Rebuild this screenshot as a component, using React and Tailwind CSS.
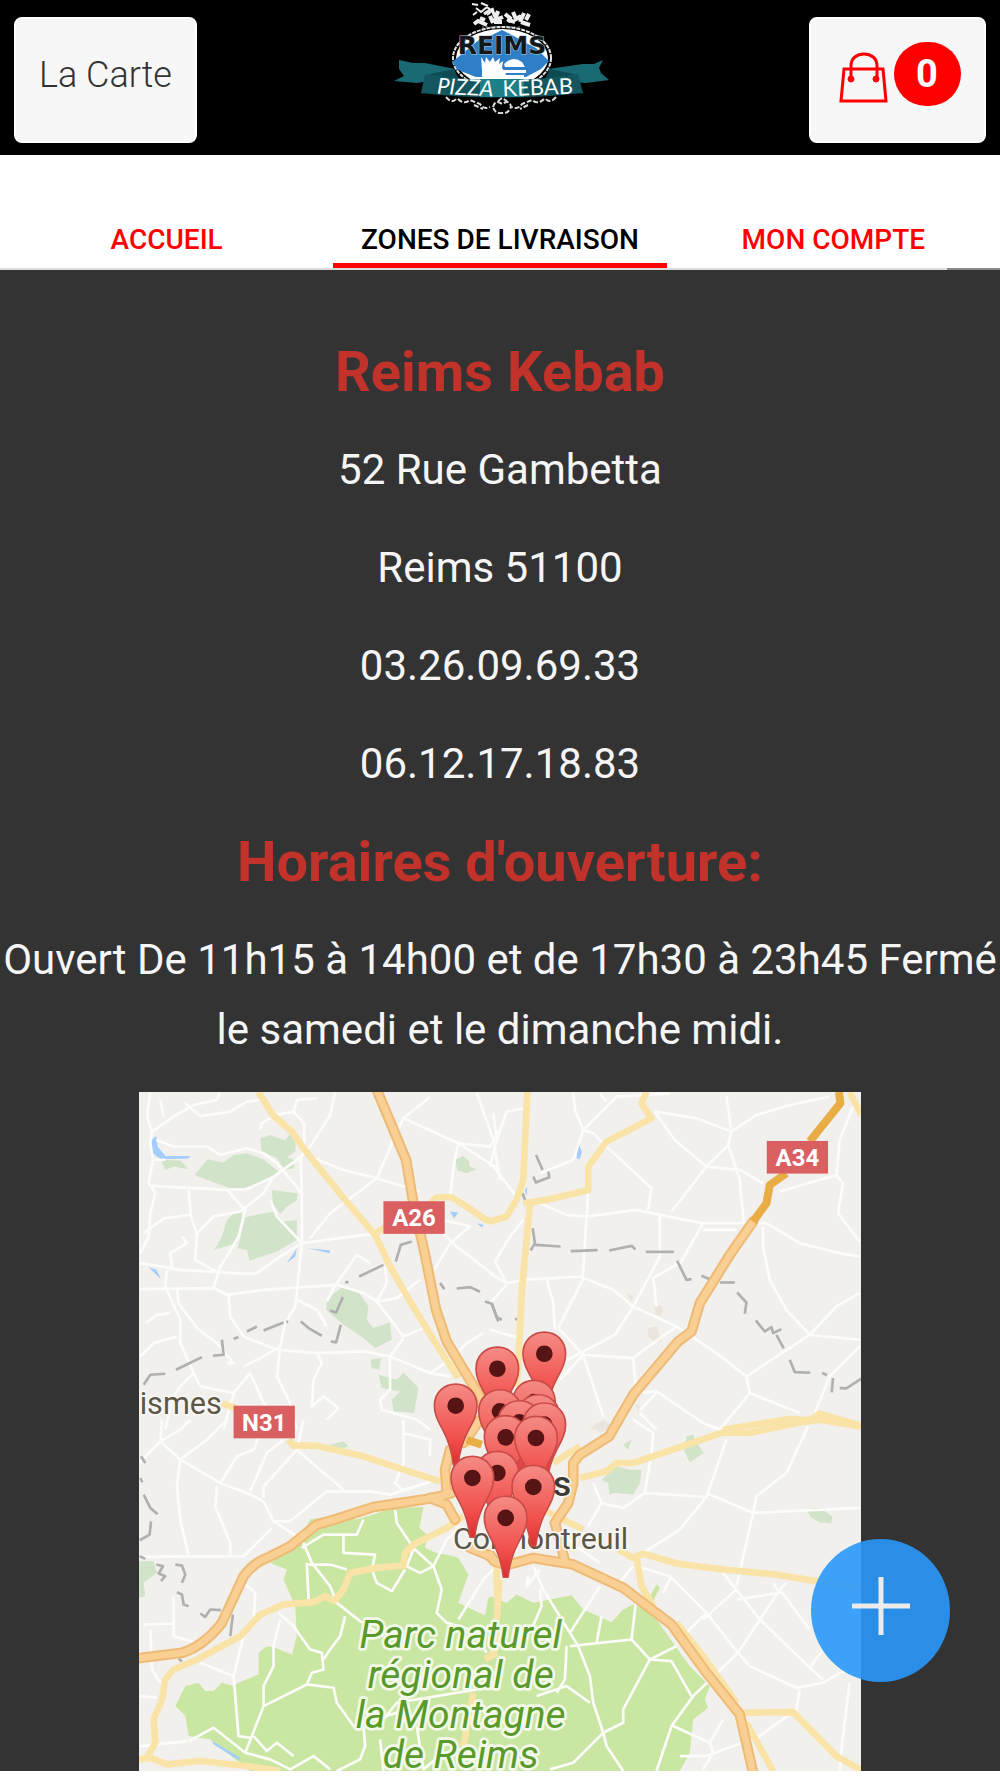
import React, { useState } from 'react';

const TABS = ['ACCUEIL', 'ZONES DE LIVRAISON', 'MON COMPTE'];

const CONTACT = ['52 Rue Gambetta', 'Reims 51100', '03.26.09.69.33', '06.12.17.18.83'];

// Map geometry, one entry per tile; coordinates are relative to the tile's x / y
const TILES = [
    {
        x: 0,
        y: 0,
        woods: [
            'M390 175L420 165L465 182L480 160L497 180L495 215L470 232L494 240L490 265L465 270L440 235L395 215Z',
            'M193 285L232 238L280 248L310 225L350 220L400 238L450 280L400 305L340 325L300 325L232 300Z',
            'M92 240L150 242L175 268L130 260L105 270Z',
            'M425 330L502 340L500 362L470 380L450 402L428 372Z',
            'M335 390L318 395L290 420L275 470L252 510L320 490L335 440Z',
            'M345 412L430 395L460 425L500 420L500 480L440 515L358 543L350 510L322 505Z',
            'M635 622L680 630L715 680L710 720L730 745L780 728L785 780L735 805L700 775L640 735L588 690L590 660Z',
            'M722 840L752 835L748 870L725 865Z',
            'M745 885L800 900L820 878L865 925L852 1000L790 995L785 960L810 935L755 925Z',
            'M975 240L1000 228L1018 245L1018 258L1040 268L1010 280L982 272Z',
        ],
        parks: [],
        blooms: [],
        waters: ['M58 185L78 168L82 200L105 228L180 228L175 236L92 238L60 215Z', 'M960 395L985 398L972 415Z', 'M1040 430L1062 435L1055 442Z', 'M55 562L78 570L92 598Z', 'M470 550L500 505L495 530Z', 'M535 505L600 512L598 520Z'],
        lanes: [
            'M60 36L50 110L65 155L60 190L68 240L55 310L75 340L60 400L55 470L30 520',
            'M65 155L130 110L190 75L260 60L270 36',
            'M165 70L210 108L300 95L350 65L390 60',
            'M78 180L130 200L230 200L270 225L350 205L400 220L440 250L500 320L515 345L515 490L500 640L495 680L465 730L450 800L440 890L475 960L500 1050',
            'M615 36L600 105L540 200L500 240L430 290L350 328L290 330L60 318',
            'M390 150L395 130L435 105L490 95L500 60L560 55',
            'M490 95L522 130L522 200L512 240L515 345',
            'M175 330L182 410L200 460L195 540L250 570L265 575L250 625L290 645',
            'M40 460L100 415L180 405M200 460L250 410L330 395L400 340L430 290',
            'M290 330L345 390L325 470L265 570M420 360L440 410L515 490L450 530L380 580L350 582L150 570L30 550',
            'M515 490L700 465L740 462M540 475L600 400L740 295L790 180L820 115L900 50',
            'M550 235L640 270L740 295L870 335M820 115L985 190L1110 270M985 190L970 260L960 350M985 190L1080 200L1110 150',
            'M1040 36L1090 180L1110 300M940 420L1020 440L960 490L900 590M920 440L980 500L1110 600',
            'M30 628L250 625L290 645L400 630L620 615L700 640L740 665L820 770L880 745',
            'M590 665L610 625L680 525L720 550M765 560L770 610L740 665L800 655L870 600',
            'M110 570L105 620L150 720L150 790L190 880L210 920L310 940M125 570L120 520L170 490L155 470',
            'M140 625L145 670L200 745L260 790L310 850L290 850',
            'M295 645L300 710L340 770L440 810L560 820L700 815L780 830L900 880L960 890',
            'M340 860L400 830L450 800M190 880L150 920L125 960L105 1050M310 940L360 880L400 970L480 1050M310 940L280 1050',
            'M560 820L575 850L550 900L545 980L580 950L625 985L590 1020M780 830L780 930L750 960L755 990L860 1020L900 1050M780 830L820 775',
            'M900 880L960 840L1010 790L1060 760M30 830L70 790L140 770M500 660L560 690L590 740',
            'M45 730L80 705L120 700M70 240L105 240M90 60L100 110',
        ],
        roads: [
            'M385 36L428 105L485 155L520 205L580 280L645 360L735 465L780 560L840 665L910 780L985 895',
            'M735 460L770 440M900 370L920 352L965 352L1010 380L1065 418L1085 425',
            'M275 970L340 995',
        ],
        motorways: ['M740 30L780 125L828 240L850 370L885 525L918 690L950 785L1010 885L1050 950L1070 1000'],
        trunks: [],
        borders: [
            'M40 915L60 885L105 882', 'M137 870L215 832', 'M248 828L280 825L275 780', 'M310 778L325 772', 'M350 755L380 740', 'M400 752L460 728', 'M468 726L474 726',
            'M512 725L535 745L575 768', 'M602 785L618 788L632 735', 'M600 692L618 698L638 652', 'M645 608L655 606', 'M687 590L760 555', 'M797 545L812 495L845 485',
            'M905 570L908 585', 'M930 610L943 628', 'M980 626L1020 622L1050 636', 'M1065 665L1085 672L1105 725',
        ],
    },
    {
        x: 1080,
        y: 0,
        woods: [],
        parks: [],
        blooms: ['M495 680L515 675L520 695L510 710L495 700Z', 'M475 745L500 740L515 785L495 785L475 770Z', 'M410 640L430 650L425 665Z', 'M435 970L455 985L445 995Z', 'M320 1030L350 1030L330 1050L300 1050Z'],
        waters: ['M265 190L276 215L270 238L260 235Z', 'M105 330L112 320L110 350Z'],
        lanes: [
            'M10 260L80 350M20 180L50 95L100 85M10 100L20 180L0 260',
            'M250 36L255 90L280 150L310 160L350 200L485 325L475 390M280 150L250 240L150 280M280 150L380 50L540 40',
            'M330 40L350 65M495 95L555 180L650 260L715 195L750 300L762 425',
            'M495 95L620 115L725 155L800 105L900 75L1020 50M710 50L725 155L715 195M650 260L750 270L820 310',
            'M150 370L230 405L290 410L440 390L510 405L640 430L830 430L930 490L1050 520L1110 530',
            'M545 395L650 260M510 405L510 530L430 680L375 765L205 855M290 410L295 330M290 410L278 600L205 745',
            'M0 580L50 610L100 600L270 590L370 630L430 680L560 740L680 820L770 890L780 940L930 1000',
            'M50 610L15 545L60 470L100 420M170 600L190 670L195 750M640 430L600 500L575 545L490 595L500 680',
            'M870 335L1040 285L1060 310L1045 400L1110 485M1090 80L1050 180L1040 285',
            'M820 440L820 500L840 600L890 690L960 765L1110 780M770 890L960 765L1040 680L1110 640',
            'M1110 800L1020 890L975 1000M205 745L280 825L430 835L440 950M280 825L210 900M280 825L340 1010',
            'M430 835L490 790L560 740M430 940L500 935L640 1030L690 1050L780 940M450 990L500 940M0 750L90 775M450 1000L500 1050',
            'M0 670L50 615M640 450L740 450',
        ],
        roads: [
            'M112 36L100 300L80 360L50 410L0 425',
            'M470 36L455 70L485 115L350 185L295 260L295 330L170 360L100 370',
            'M120 370L95 640L85 850L80 920',
            'M1080 36L1115 105',
            'M700 1050L900 1018L960 1022L990 1002L1115 1038',
        ],
        motorways: ['M790 425L720 525L630 670L605 755L565 785L430 945L385 1022'],
        trunks: ['M1048 36L1052 70L960 185M890 280L840 315L830 370L790 425'],
        borders: [
            'M138 225L158 270', 'M175 275L178 292L138 308L130 290', 'M98 340L108 370', 'M128 445L135 490L122 512', 'M135 495L212 500', 'M242 514L323 511', 'M358 512L425 498L437 508', 'M468 516L552 516',
            'M562 543L590 600L605 598', 'M635 588L660 598', 'M690 608L735 608', 'M742 638L770 668L765 702', 'M798 722L825 755L845 742L850 760L875 748M860 765L882 806',
            'M900 840L915 877L962 879', 'M997 880L1012 886M1030 895L1026 938M1050 925L1070 926L1115 897', 'M5 670L20 712L36 720', 'M75 718L86 718',
        ],
    },
    {
        x: 0,
        y: 1020,
        woods: ['M26 425L70 425L80 460L40 490L45 530L26 535Z', 'M600 75L640 65L655 80L605 100Z'],
        parks: [
            'M135 860L165 800L205 790L225 815L250 815L275 790L310 800L325 790L385 765L385 700L410 680L435 685L485 705L500 650L495 560L460 480L470 450L420 430L500 370L540 300L600 290L680 300L790 265L880 262L868 325L890 345L885 385L920 400L960 408L985 415L1015 465L985 550L1065 588L1075 535L1110 530L1110 1060L360 1055L240 960L175 950L165 890Z',
        ],
        blooms: [],
        waters: ['M245 965L330 1015L325 1022L250 975Z'],
        lanes: [
            'M26 130L90 65L150 120L270 190L350 220L400 245L430 305L515 360L545 430L600 500L620 550L690 605L760 650',
            'M90 65L95 0M90 65L150 30L180 0M150 120L140 200L150 300L175 410M26 412L340 410L425 325M260 200L255 260L300 370L300 410',
            'M150 120L230 60L290 0M270 190L320 110L370 90L390 40M400 235L400 200L500 90L520 0M360 215L410 100L460 60',
            'M430 305L480 305L590 215L640 215L720 215L780 225L920 180M500 90L640 210M820 0L820 130L795 190L820 215M900 110L900 60L820 40',
            'M515 385L580 345L680 345L700 300M640 345L640 400L735 405L725 450L740 490L785 515L825 450',
            'M530 430L535 540M535 435L600 435L650 450M795 270L800 310L850 385L910 440L935 510L920 580L950 610L1020 630L1070 700M850 390L830 440L870 460L910 440',
            'M910 440L950 360L990 320M985 600L1060 480L1100 440',
            'M450 600L430 680L430 740L400 800L400 860L365 950L345 1000M445 580L490 620L540 690L575 700L580 750L545 760L530 795L400 860',
            'M645 590L630 650L600 690L580 720M530 795L610 805L620 850L670 920L800 880L830 820M700 920L705 980L690 1020L620 1055',
            'M175 965L250 925L345 1000L420 1020L480 1050L550 1010L600 1050M370 950L410 995L440 970L490 1010M750 960L760 1055',
            'M340 650L310 770L325 950L360 955M210 730L310 770M150 740L200 715M130 530L130 650L200 670M40 615L130 612M60 630L65 750L90 790M340 490L375 520L370 600M30 830L80 835M30 980L170 965',
            'M760 900L800 850L1100 800M860 920L880 1050L940 1000',
        ],
        roads: [
            'M475 60L490 78L560 78L700 110L820 150L930 185',
            'M26 1020L60 1015L110 1035L210 1025L350 1040L450 1055M50 1015L75 970L70 900L95 840L105 780L130 750L200 720L330 650L390 585L460 555L550 548L585 530L612 545L640 510L660 460L740 445L820 438L825 400L850 375L950 325L1000 290',
            'M1100 440L1102 590M1030 820L1000 980M1065 720L1100 700',
            'M1010 80L1040 20',
        ],
        motorways: ['M20 717L155 700Q220 680 275 610L340 470Q370 430 410 415L480 380L560 315L620 298L730 262L800 252L890 238L950 225L965 220', 'M950 220L945 150L960 90', 'M900 235L950 255L975 300', 'M1020 385L1070 405L1092 420', 'M1000 70L1050 0'],
        trunks: ['M1010 60L1055 75'],
        borders: [
            'M40 225L60 265L82 284', 'M62 305L58 345L28 362', 'M32 110L45 130M30 175L36 188', 'M28 410L45 418', 'M78 435L98 440L85 462L105 470L92 485', 'M135 435L155 438L165 465L155 490',
            'M140 518L155 525L160 555L175 560', 'M210 582L225 592L240 570L272 572', 'M308 585L300 650', 'M145 718L155 726',
        ],
    },
    {
        x: 1080,
        y: 1020,
        woods: [
            'M335 180L380 140L420 150L455 150L450 190L430 225L375 220L358 225L355 190Z',
            'M590 50L610 45L625 75L642 100L600 128L583 95Z',
            'M948 268L990 265L1028 290L1025 312L990 308L965 295Z',
            'M400 75L425 60L415 90Z',
        ],
        parks: [
            'M0 530L50 550L80 525L130 550L245 527L280 570L365 608L400 570L440 550L500 600L600 740L660 800L645 840L655 865L610 900L600 1000L570 1055L0 1055Z',
            'M480 530L500 495L510 505L490 545Z',
        ],
        blooms: ['M310 20L340 0L370 20L330 40Z'],
        waters: [],
        lanes: [
            'M430 0L490 40L485 100L465 220L400 265L335 250L310 190M465 220L650 232L710 60M335 250L295 320M650 232L570 330L460 400M650 220L790 280L740 500',
            'M955 20L890 160L800 230L790 280L1110 265M200 320L250 375L330 430M430 440L380 500',
            'M440 440L540 470L650 580L745 700L780 740L920 805L1000 790L1070 750M700 460L810 600L960 745L1000 780M870 510L745 700L610 830L545 920L500 1055',
            'M650 580L580 650M740 540L870 520L850 490M870 510L960 630M1000 690L960 745M930 810L920 870L810 950L650 1010L570 1010',
            'M150 450L110 500L115 470M130 440L160 510L240 640L265 680L300 770L310 850L340 940L350 980L400 1055M150 510L155 560L120 640',
            'M330 500L240 640M440 530L425 660L240 680M335 590L320 670M425 660L480 720L545 725L605 830M480 720L400 870L400 910L340 940L250 1030L180 1050',
            'M230 680L225 780L200 820M140 830L230 800L300 850M480 720L560 680M700 900L660 970L670 1000L640 1050M1080 790L1060 950L1050 1055M550 920L660 970M545 470L520 520M890 490L870 510',
            'M640 600L740 510',
        ],
        roads: [
            'M190 130L270 80M270 175L350 155L380 130L430 130L700 38L780 40L920 10L990 0L1115 20',
            'M160 270L280 330M385 390L430 415L460 402L560 432L700 450L860 465L980 485L1115 505M440 415L455 500L490 560',
            'M0 710L15 690L28 480',
            'M560 610L640 710L740 850M760 880L910 878L1040 1010L1115 1052M770 910L850 1055',
        ],
        motorways: ['M385 2L358 50L270 105L250 130L250 190L235 250L195 310', 'M0 405L12 425L50 437L130 415L250 435L400 505L545 615L650 760L750 885L790 1060', 'M195 310L225 425'],
        trunks: [],
        borders: [],
    },
];

const SHIELDS = [
    { label: 'A26', x: 760, y: 364 },
    { label: 'A34', x: 1911, y: 183 },
    { label: 'N31', x: 310, y: 978 },
];

const PINS = [
    [1243, 822], [1102, 867], [977, 978], [1212, 967], [1110, 995], [1225, 1010], [1168, 1028],
    [1243, 1035], [1127, 1073], [1218, 1075], [1102, 1180], [1027, 1195], [1210, 1222], [1127, 1315],
];

const PARK_LINES = ['Parc naturel', 'régional de', 'la Montagne', 'de Reims'];

const Layer = ({ name, ...props }) => (
    <g {...props}>
        {TILES.map((tile, i) => (
            <g key={i} transform={`translate(${tile.x} ${tile.y})`}>
                {tile[name].map((d, j) => <path key={j} d={d} />)}
            </g>
        ))}
    </g>
);

const DeliveryMap = () => (
    <svg
        viewBox="26 36 2168 2039"
        role="img"
        aria-label="Zones de livraison"
        className="block w-full h-auto font-['Roboto',sans-serif]"
        strokeLinejoin="round"
    >
        <defs>
            <linearGradient id="pin" x1="0" y1="0" x2="0" y2="1">
                <stop offset="0" stopColor="#f58b85" />
                <stop offset="0.65" stopColor="#f1524e" />
                <stop offset="1" stopColor="#e02c30" />
            </linearGradient>
        </defs>
        <rect x="26" y="36" width="2168" height="2039" fill="#f2f0ed" />
        <Layer name="woods" fill="#d1e3c8" />
        <Layer name="parks" fill="#cae6a3" />
        <Layer name="blooms" fill="#e9e4dc" />
        <Layer name="waters" fill="#a3ccff" />
        <Layer name="lanes" fill="none" stroke="#fcfcfa" strokeWidth="8" />
        <Layer name="borders" fill="none" stroke="#b0b0b0" strokeWidth="8" />
        <Layer name="roads" fill="none" stroke="#fae3a6" strokeWidth="20" />
        <Layer name="motorways" fill="none" stroke="#eebb76" strokeWidth="32" strokeLinecap="round" />
        <Layer name="motorways" fill="none" stroke="#f9cf94" strokeWidth="20" strokeLinecap="round" />
        <Layer name="trunks" fill="none" stroke="#e9ad46" strokeWidth="24" />

        {SHIELDS.map(({ label, x, y }) => (
            <g key={label}>
                <rect x={x} y={y} width="184" height="98" fill="#d95f61" />
                <text x={x + 92} y={y + 75} textAnchor="middle" fontSize="72" fontWeight="700" fill="#fff">{label}</text>
            </g>
        ))}

        <g fill="#5c5648" stroke="#f8f7f4" strokeWidth="10" paintOrder="stroke">
            <text x="28" y="1003" fontSize="92">ismes</text>
            <text x="1495" y="1408" textAnchor="end" fontSize="91">Cormontreuil</text>
            <text x="1324" y="1248" textAnchor="end" fontSize="108" fontWeight="500" fill="#3c3a34">Reims</text>
        </g>
        <text
            y="1585"
            fill="#5a9a2c"
            stroke="#f2f9e8"
            strokeWidth="16"
            paintOrder="stroke"
            textAnchor="middle"
            fontSize="117"
            fontStyle="italic"
        >
            {PARK_LINES.map((line) => (
                <tspan key={line} x="992" dy="120">{line}</tspan>
            ))}
        </text>

        {PINS.map(([x, y]) => (
            <g key={`${x}-${y}`} transform={`translate(${x} ${y})`}>
                <path
                    d="M0-65C36-65 64-38 64 0C64 28 51 50 38 74C22 104 12 132 7 178H-7C-12 132-22 104-38 74C-51 50-64 28-64 0C-64-38-36-65 0-65Z"
                    fill="url(#pin)"
                    stroke="#c94b48"
                    strokeWidth="5"
                />
                <circle r="25" fill="#561414" />
            </g>
        ))}
    </svg>
);

const Logo = () => (
    <svg viewBox="390 0 220 118" role="img" aria-label="Reims Pizza Kebab" className="h-[118px] w-[220px]">
        {/* crown */}
        <g fill="none" stroke="#efefef">
            <path d="M472 4l6 1M481 3l7 3M476 8l5 4 6-5 5 4-5 4M473 15l4-3" strokeWidth="2" />
            <path d="M484 14l6-4M492 8l2 7 5-3" strokeWidth="3" />
            <path d="M480 18l5 2M490 16l3 7M498 11l-3 9 8-3M505 14l5 4-2 4M513 12l3 7 5-3M524 13l-4 9M529 14l-3 6" strokeWidth="4" />
            <path d="M474 24l4-3 9 4M494 22h8M508 20l7 2M521 22l9 3" strokeWidth="4" />
            <path d="M482 27h38" stroke="#777777" strokeWidth="1" strokeDasharray="2 2" />
        </g>
        {/* medallion */}
        <ellipse cx="502" cy="58" rx="49" ry="31" fill="#000" stroke="#e5e5e5" strokeWidth="2" strokeDasharray="4 1" />
        <ellipse cx="502" cy="58" rx="46" ry="29" fill="#fff" />
        <path d="M502 30l12 6 10 6 12 6 13 13-8 8-15 8h-50l-18-7-6-8 16-13 12-10 12-4z" fill="#2e7fc7" />
        <path d="M481 57l4 6 1-6 4 5 3-5 2 5 5-4-1 6 4-3-1 7 4 6-2 5h-22v-9z" fill="#fff" />
        <path d="M504 64q9-9 18-2l3 5h-20zM503 70h23v3h-23zM504 75h20v3h-20z" fill="#fff" />
        <text x="502" y="54" textAnchor="middle" fontSize="25" fill="#10181c" stroke="#b9c8d2" strokeWidth="1" paintOrder="stroke" fontWeight="700" className="font-['DejaVu_Sans',sans-serif]">REIMS</text>
        {/* ribbon */}
        <path d="M399 60l14 3h12l30 6-6 16-19-4-13 2-23-2 10-5-5-7z" fill="#1a6a73" />
        <path d="M603 60l-4 8 2 5 8 7-23 3-13-1-20 4-5-17 35-5h11z" fill="#1a6a73" />
        <path d="M430 74l24-5 5 10-37 15z" fill="#0e4a52" />
        <path d="M574 74l-24-5-5 10 38 15z" fill="#0e4a52" />
        <path d="M425 74q77 12 153 0l5 19q-81 9-162 0z" fill="#135660" />
        <path d="M480 79h44v18h-44z" fill="#1d7f87" />
        <g fill="#fff" fontSize="22" textAnchor="middle" className="font-['Lato',sans-serif]">
            <text x="465" y="95" fontStyle="italic" transform="rotate(3 465 95)">PIZZA</text>
            <text x="538" y="95" transform="rotate(-2 538 95)">KEBAB</text>
        </g>
        {/* scrollwork */}
        <g fill="none" stroke="#dcdcdc" strokeWidth="2" strokeDasharray="5 2">
            <path d="M446 97q6 7 10 2M458 99q6 6 12 1l10 4q4 6 10 3M556 97q-6 7-10 2M544 99q-6 6-12 1l-10 4q-4 6-10 3" />
            <path d="M493 107q2-8 9-3 8-5 9 3-3 7-9 6-7 1-9-6M498 101l4-3 5 3M474 105l9 4M528 105l-8 4" />
        </g>
    </svg>
);

const BagIcon = () => (
    <svg viewBox="0 0 49 51" aria-hidden="true" className="w-[49px] h-[51px]" fill="none" stroke="#ff0000" strokeWidth="3">
        <path d="M5 17H44L47 49H2Z" />
        <path d="M12 26V14C12 6 18 2 25 2S38 6 38 14V26" />
        <circle cx="12" cy="27" r="3" fill="#ff0000" strokeWidth="1" />
        <circle cx="37" cy="27" r="3" fill="#ff0000" strokeWidth="1" />
    </svg>
);

const App = () => {
    const [activeTab, setActiveTab] = useState(1);

    return (
        <div className="min-h-screen bg-white font-['Roboto',sans-serif]">
            <header className="h-[155px] flex items-start justify-between px-3.5 bg-black">
                <div className="flex-1 pt-[17px]">
                    <button type="button" className="w-[183px] h-[126px] pb-2.5 rounded-lg border-2 border-white bg-[#f7f7f7] text-[36px] font-light text-[#333333]">
                        La Carte
                    </button>
                </div>
                <a href="#accueil"><Logo /></a>
                <div className="flex-1 flex justify-end pt-[17px]">
                    <button type="button" aria-label="Panier" className="w-[177px] h-[126px] pt-[23px] pl-1 flex items-start justify-center gap-1.5 rounded-lg border-2 border-white bg-[#f7f7f7]">
                        <span className="pt-2.5"><BagIcon /></span>
                        <span className="w-[67px] h-16 flex items-center justify-center rounded-[32px] bg-[#ff0000] text-[38px] font-bold text-white">0</span>
                    </button>
                </div>
            </header>

            <nav className="relative h-[115px] grid grid-cols-3 bg-white border-b-2 border-[#dcdcdc]">
                {TABS.map((tab, i) => (
                    <button
                        key={tab}
                        type="button"
                        onClick={() => setActiveTab(i)}
                        className={`pt-[62px] text-[28px] leading-[46px] font-medium whitespace-nowrap border-b-5 ${
                            activeTab === i ? 'text-black border-[#ff0000]' : 'text-[#ff0000] border-transparent'
                        }`}
                    >
                        {tab}
                    </button>
                ))}
                <span className="absolute right-0 -bottom-0.5 w-[53px] h-0.5 bg-[#8a8a8a]" />
            </nav>

            <main className="pt-[67px] bg-[#333333] text-center text-[#f5f5f5] text-[42px] leading-[70px]">
                <div className="flex flex-col gap-7">
                    <h1 className="text-[56px] leading-[70px] font-bold text-[#c1322b]">Reims Kebab</h1>
                    {CONTACT.map((line) => <p key={line}>{line}</p>)}
                    <h2 className="text-[56px] leading-[70px] font-bold text-[#c1322b]">Horaires d'ouverture:</h2>
                    <p>Ouvert De 11h15 à 14h00 et de 17h30 à 23h45 Fermé le samedi et le dimanche midi.</p>
                </div>
                <div className="mx-[139px] mt-[27px]">
                    <DeliveryMap />
                </div>
            </main>

            <button
                type="button"
                aria-label="Ajouter"
                className="fixed right-[50px] bottom-24 w-[139px] h-[143px] pb-2.5 flex items-center justify-center rounded-[50%] bg-[#2a98fa]/90"
            >
                <svg viewBox="0 0 58 58" className="w-[58px] h-[58px]" stroke="#ebebeb" strokeWidth="5">
                    <path d="M29 0V58M0 29H58" />
                </svg>
            </button>
        </div>
    );
};

export default App;
